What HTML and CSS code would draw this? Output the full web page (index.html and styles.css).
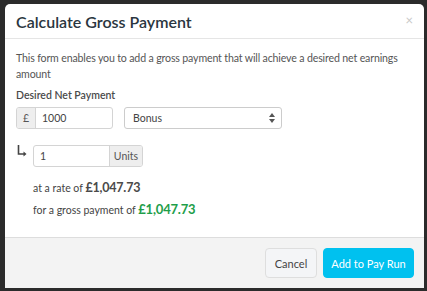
FILE: index.html
```html
<!DOCTYPE html>
<html>
<head>
<meta charset="utf-8">
<link rel="stylesheet" href="styles.css">
</head>
<body>
<div class="modal">
  <div class="modal-header">
    <h4 class="title">Calculate Gross Payment</h4>
    <span class="close">×</span>
  </div>
  <div class="modal-body">
    <p class="intro"><span class="line">This form enables you to add a gross payment that will achieve a desired net earnings</span> amount</p>
    <div class="label">Desired Net Payment</div>
    <div class="row">
      <div class="input-group net">
        <span class="addon">£</span>
        <span class="field">1000</span>
      </div>
      <div class="select">
        <span>Bonus</span>
        <svg class="carets" width="6" height="10" viewBox="0 0 6 10"><path d="M3 0L6 4H0z M3 10L0 6H6z" fill="#555"/></svg>
      </div>
    </div>
    <div class="units-row">
      <svg class="arrow" width="10" height="12" viewBox="0 0 10 12"><path d="M1.5 0V9H7" fill="none" stroke="#444" stroke-width="1.6"/><path d="M6.5 6.5L9.5 9L6.5 11.5z" fill="#444"/></svg>
      <div class="units-col">
        <div class="input-group units">
          <span class="field">1</span>
          <span class="addon">Units</span>
        </div>
        <p class="rate">at a rate of <b>£1,047.73</b></p>
        <p class="gross">for a gross payment of <b>£1,047.73</b></p>
      </div>
    </div>
  </div>
  <div class="modal-footer">
    <button class="btn cancel">Cancel</button>
    <button class="btn primary">Add to Pay Run</button>
  </div>
</div>
</body>
</html>
```
FILE: styles.css
```css
* { box-sizing: border-box; }
html, body { margin: 0; padding: 0; }
body {
  background: #2b2b2b;
  width: 427px;
  height: 291px;
  overflow: hidden;
  font-family: Lato, "Open Sans", "Liberation Sans", sans-serif;
  color: #555;
  padding: 4px 3px 3px 5px;
}
.modal {
  background: #fff;
  border-radius: 5px 5px 0 0;
  height: 284px;
  display: flex;
  flex-direction: column;
}
.modal-header {
  height: 35px;
  border-bottom: 1px solid #e5e5e5;
  display: flex;
  align-items: center;
  justify-content: space-between;
  padding: 0 11px 0 11px;
}
.title {
  margin: 0;
  font-size: 16px;
  font-weight: 600;
  color: #2a3640;
}
.close {
  color: #c8c8c8;
  font-size: 13px;
  margin-top: -2px;
}
.modal-body {
  flex: 1;
  padding: 11px 8px 0 11px;
}
.intro {
  margin: 0;
  font-size: 10.6px;
  letter-spacing: -0.15px;
  line-height: 16px;
  color: #555;
}
.line { white-space: nowrap; }
.label {
  margin-top: 5px;
  font-size: 10.5px;
  font-weight: 600;
  color: #4a4a4a;
  line-height: 16px;
}
.row {
  display: flex;
  gap: 11px;
  margin-top: 4px;
}
.input-group {
  display: flex;
  height: 22px;
  border: 1px solid #d4d4d4;
  border-radius: 3px;
  font-size: 10.5px;
  color: #444;
  overflow: hidden;
}
.addon {
  background: #eee;
  display: flex;
  align-items: center;
  justify-content: center;
  color: #555;
}
.field {
  display: flex;
  align-items: center;
  padding-left: 6px;
}
.net { width: 97px; }
.net .addon { width: 19px; border-right: 1px solid #d4d4d4; }
.net .field { flex: 1; }
.select {
  width: 158px;
  height: 22px;
  border: 1px solid #ccc;
  border-radius: 3px;
  display: flex;
  align-items: center;
  justify-content: space-between;
  padding: 0 6px 0 8px;
  font-size: 10.5px;
  color: #444;
}
.units-row {
  display: flex;
  margin-top: 16px;
}
.arrow { margin: 0 6px 0 1px; }
.units-col { display: flex; flex-direction: column; }
.units { width: 110px; }
.units .field { flex: 1; }
.units .addon { width: 33px; border-left: 1px solid #d4d4d4; }
.rate, .gross {
  margin: 0;
  font-size: 10.5px;
  color: #444;
}
.rate { margin-top: 13px; }
.rate b { font-size: 12.5px; font-weight: 700; color: #4a4a4a; letter-spacing: -0.2px; }
.gross { margin-top: 6px; }
.gross b { font-size: 13px; font-weight: 700; color: #1e9e4a; letter-spacing: -0.2px; }
.modal-footer {
  height: 51px;
  background: #f3f3f3;
  border-top: 1px solid #ddd;
  display: flex;
  justify-content: flex-end;
  align-items: center;
  gap: 6px;
  padding: 0 10px 0 0;
}
.btn {
  font-family: inherit;
  height: 30px;
  border-radius: 4px;
  font-size: 11px;
  border: 1px solid #dedede;
  padding: 0;
}
.cancel { width: 52px; background: #f4f5f7; color: #444; }
.primary { width: 91px; background: #00c1ef; border-color: #00c1ef; color: #fff; }
```
